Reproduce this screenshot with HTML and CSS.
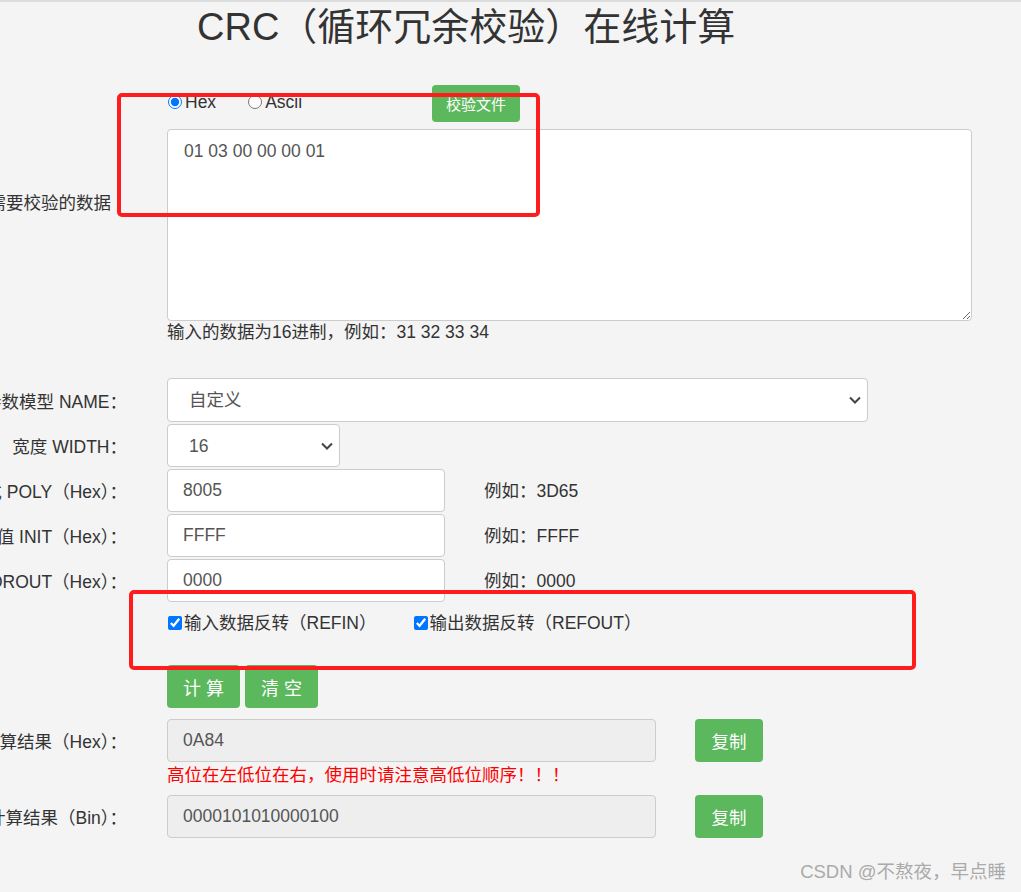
FILE: index.html
```html
<!DOCTYPE html>
<html lang="zh-CN">
<head>
    <meta charset="UTF-8">
    <meta name="viewport" content="width=device-width, initial-scale=1.0">
    <title>CRC（循环冗余校验）在线计算</title>
    <link rel="stylesheet" href="styles.css">
</head>
<body>
    <div class="topbar"></div>
    <h1 class="title">CRC（循环冗余校验）在线计算</h1>

    <div class="form">
        <div class="form-row form-row-data">
            <label class="form-label label-data">需要校验的数据</label>
            <div class="form-control-col">
                <div class="mode-row">
                    <label class="radio"><input type="radio" name="mode" checked>Hex</label>
                    <label class="radio radio-ascii"><input type="radio" name="mode">Ascii</label>
                    <button class="btn btn-success btn-file">校验文件</button>
                </div>
                <textarea class="field textarea">01 03 00 00 00 01</textarea>
            </div>
        </div>
        <div class="hint">输入的数据为16进制，例如：31 32 33 34</div>

        <div class="form-row row-first">
            <label class="form-label">参数模型 NAME：</label>
            <select class="field select select-name">
                <option>自定义</option>
            </select>
        </div>
        <div class="form-row">
            <label class="form-label">宽度 WIDTH：</label>
            <select class="field select select-width">
                <option>16</option>
            </select>
        </div>
        <div class="form-row">
            <label class="form-label">多项式 POLY（Hex）：</label>
            <input class="field input input-short" type="text" value="8005">
            <span class="example">例如：3D65</span>
        </div>
        <div class="form-row">
            <label class="form-label">初始值 INIT（Hex）：</label>
            <input class="field input input-short" type="text" value="FFFF">
            <span class="example">例如：FFFF</span>
        </div>
        <div class="form-row">
            <label class="form-label">结果异或值 XOROUT（Hex）：</label>
            <input class="field input input-short" type="text" value="0000">
            <span class="example">例如：0000</span>
        </div>

        <div class="check-row">
            <label class="check"><input type="checkbox" checked>输入数据反转（REFIN）</label>
            <label class="check check-out"><input type="checkbox" checked>输出数据反转（REFOUT）</label>
        </div>

        <div class="action-row">
            <button class="btn btn-success btn-lg">计 算</button>
            <button class="btn btn-success btn-lg">清 空</button>
        </div>

        <div class="form-row result-row">
            <label class="form-label">计算结果（Hex）：</label>
            <input class="field input input-result" type="text" value="0A84" readonly>
            <button class="btn btn-success btn-copy">复制</button>
        </div>
        <div class="warn">高位在左低位在右，使用时请注意高低位顺序！！！</div>
        <div class="form-row result-row">
            <label class="form-label">计算结果（Bin）：</label>
            <input class="field input input-result" type="text" value="0000101010000100" readonly>
            <button class="btn btn-success btn-copy">复制</button>
        </div>
    </div>

    <div class="mark mark-top"></div>
    <div class="mark mark-bottom"></div>
    <div class="watermark">CSDN @不熬夜，早点睡</div>
</body>
</html>
```

FILE: styles.css
```css
* {
    box-sizing: border-box;
}

body {
    margin: 0;
    min-height: 892px;
    background: #f4f4f4;
    color: #333;
    font-family: "Liberation Sans", "Noto Sans CJK SC", sans-serif;
    font-size: 17.5px;
    overflow: hidden;
    position: relative;
}

.topbar {
    height: 2px;
    background: #dcdcdc;
}

.title {
    margin: 0;
    padding-left: 197px;
    font-size: 38px;
    font-weight: normal;
    line-height: 50px;
    color: #333;
}

.form {
    margin-top: 33px;
}

.form-row {
    display: flex;
    align-items: center;
    height: 43px;
    margin-bottom: 2px;
}

.form-row-data {
    height: auto;
    margin-bottom: 0;
}

.form-label {
    width: 127px;
    flex: none;
    display: flex;
    justify-content: flex-end;
    white-space: nowrap;
    margin-right: 40px;
}

.label-data {
    padding-right: 16px;
    margin-top: -4px;
}

.form-control-col {
    display: flex;
    flex-direction: column;
    gap: 7px;
}

.mode-row {
    display: flex;
    align-items: center;
    height: 37px;
}

.radio {
    display: flex;
    align-items: center;
    margin-top: -3px;
}

.radio input {
    margin: 0 3px 0 1px;
    width: 14px;
    height: 14px;
}

.radio-ascii {
    margin-left: 31px;
}

.btn {
    border: none;
    border-radius: 4px;
    background: #5cb85c;
    color: #fff;
    font-family: inherit;
    cursor: pointer;
}

.btn-file {
    margin-left: 130px;
    height: 37px;
    padding: 0 14px;
    font-size: 15px;
}

.field {
    border: 1px solid #ccc;
    border-radius: 4px;
    background: #fff;
    color: #555;
    font-family: inherit;
    font-size: 17.5px;
}

.textarea {
    width: 805px;
    height: 192px;
    padding: 10px 16px;
    line-height: 22px;
    resize: both;
}

.hint {
    margin-left: 167px;
    line-height: 22px;
    margin-bottom: 35px;
}

.row-first {
    height: 44px;
}

.select {
    height: 100%;
    padding: 0 30px 0 21px;
    appearance: none;
    background-image: url("data:image/svg+xml,%3Csvg xmlns='http://www.w3.org/2000/svg' width='12' height='8' viewBox='0 0 12 8'%3E%3Cpath d='M1 1.5l5 5 5-5' fill='none' stroke='%23444' stroke-width='2'/%3E%3C/svg%3E");
    background-repeat: no-repeat;
    background-position: right 6px center;
}

.select-name {
    width: 701px;
}

.select-width {
    width: 173px;
}

.input {
    height: 100%;
    padding: 0 15px;
}

.input-short {
    width: 278px;
}

.example {
    margin-left: 39px;
    margin-top: -2px;
}

.check-row {
    display: flex;
    align-items: center;
    margin: 9px 0 30px 167px;
    line-height: 24px;
}

.check {
    display: flex;
    align-items: center;
}

.check input {
    margin: 0 2px 0 1px;
    width: 14px;
    height: 14px;
}

.check-out {
    margin-left: 36px;
}

.action-row {
    display: flex;
    gap: 5px;
    margin-left: 167px;
    margin-bottom: 11px;
}

.btn-lg {
    height: 43px;
    width: 73px;
    font-size: 18px;
    padding: 0;
}

.input-result {
    width: 489px;
    background: #eee;
}

.btn-copy {
    margin-left: 39px;
    width: 68px;
    height: 43px;
    font-size: 17.5px;
    padding: 0;
}

.warn {
    margin-left: 167px;
    color: #f00;
    line-height: 22px;
    margin-top: 0;
    margin-bottom: 9px;
}

.mark {
    position: absolute;
    border: 4px solid #ff1c1c;
    border-radius: 5px;
}

.mark-top {
    left: 117px;
    top: 93px;
    width: 423px;
    height: 124px;
}

.mark-bottom {
    left: 129px;
    top: 590px;
    width: 787px;
    height: 80px;
}

.watermark {
    position: absolute;
    right: 15px;
    bottom: 10px;
    color: #aaa;
    font-size: 18.5px;
    line-height: 20px;
}
```
